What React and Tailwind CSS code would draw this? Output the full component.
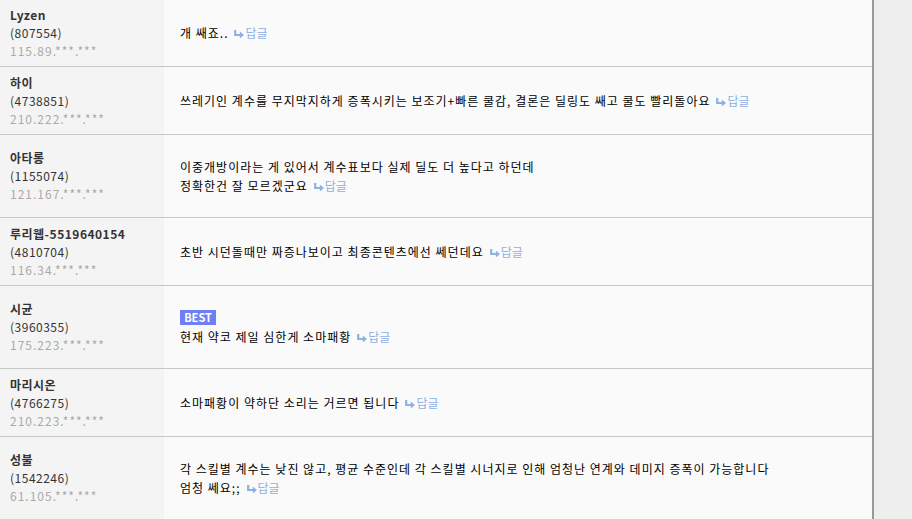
import React from "react";

const rows = [
  { name: "Lyzen", id: "807554", ip: "115.89.***.***", lines: ["개 쌔죠.."] },
  { name: "하이", id: "4738851", ip: "210.222.***.***", lines: ["쓰레기인 계수를 무지막지하게 증폭시키는 보조기+빠른 쿨감, 결론은 딜링도 쌔고 쿨도 빨리돌아요"] },
  { name: "아타롱", id: "1155074", ip: "121.167.***.***", lines: ["이중개방이라는 게 있어서 계수표보다 실제 딜도 더 높다고 하던데", "정확한건 잘 모르겠군요"] },
  { name: "루리웹-5519640154", id: "4810704", ip: "116.34.***.***", lines: ["초반 시던돌때만 짜증나보이고 최종콘텐츠에선 쎄던데요"] },
  { name: "시균", id: "3960355", ip: "175.223.***.***", best: true, lines: ["현재 약코 제일 심한게 소마패황"] },
  { name: "마리시온", id: "4766275", ip: "210.223.***.***", lines: ["소마패황이 약하단 소리는 거르면 됩니다"] },
  { name: "성불", id: "1542246", ip: "61.105.***.***", lines: ["각 스킬별 계수는 낮진 않고, 평균 수준인데 각 스킬별 시너지로 인해 엄청난 연계와 데미지 증폭이 가능합니다", "엄청 쎄요;;"] },
];

function Reply() {
  return (
    <span className="ml-[6px] inline-block align-top text-[#8fb0e3] tracking-normal">
      <svg width="10" height="8" viewBox="0 0 10 8" className="inline-block align-baseline mr-[1px]">
        <path d="M1.2 0 V5 H7" fill="none" stroke="#8fb0e3" strokeWidth="2.2" />
        <path d="M5.8 1.5 L10 5 L5.8 8.5 Z" fill="#8fb0e3" />
      </svg>
      답글
    </span>
  );
}

export default function App() {
  return (
    <div
      className="flex w-[912px] h-[519px] overflow-hidden bg-[#eeeeee] text-[12px]"
      style={{ fontFamily: '"Noto Sans CJK KR", "Noto Sans", sans-serif' }}
    >
      <div className="w-[872px] shrink-0 bg-[#fafafa] -mt-[2px]">
        {rows.map((r, i) => (
          <div key={i} className="flex min-h-[68px] border-t border-[#c8c8c8]">
            <div className="w-[164px] shrink-0 bg-[#f4f4f4] flex flex-col justify-center pl-[10px] leading-[18px]">
              <div className="font-bold text-[#333] tracking-[0.5px]">{r.name}</div>
              <div className="text-[#333] tracking-[0.5px]">({r.id})</div>
              <div className="text-[#aaaaaa] tracking-[1px]">{r.ip}</div>
            </div>
            <div className="flex-1 flex flex-col justify-center pl-[16px] py-[22px] leading-[19px] text-black tracking-[1px]">
              {r.best && (
                <div className="mt-[2px] mb-[2px] h-[15px] w-[36px] bg-[#6f80f4] text-white font-bold text-[11px] leading-[15px] text-center tracking-normal">
                  BEST
                </div>
              )}
              {r.lines.map((l, j) => (
                <div key={j} className="h-[19px]">
                  {l}
                  {j === r.lines.length - 1 && <Reply />}
                </div>
              ))}
            </div>
          </div>
        ))}
      </div>
      <div className="w-[2px] shrink-0 bg-[#999999]" />
      <div className="flex-1" />
    </div>
  );
}
